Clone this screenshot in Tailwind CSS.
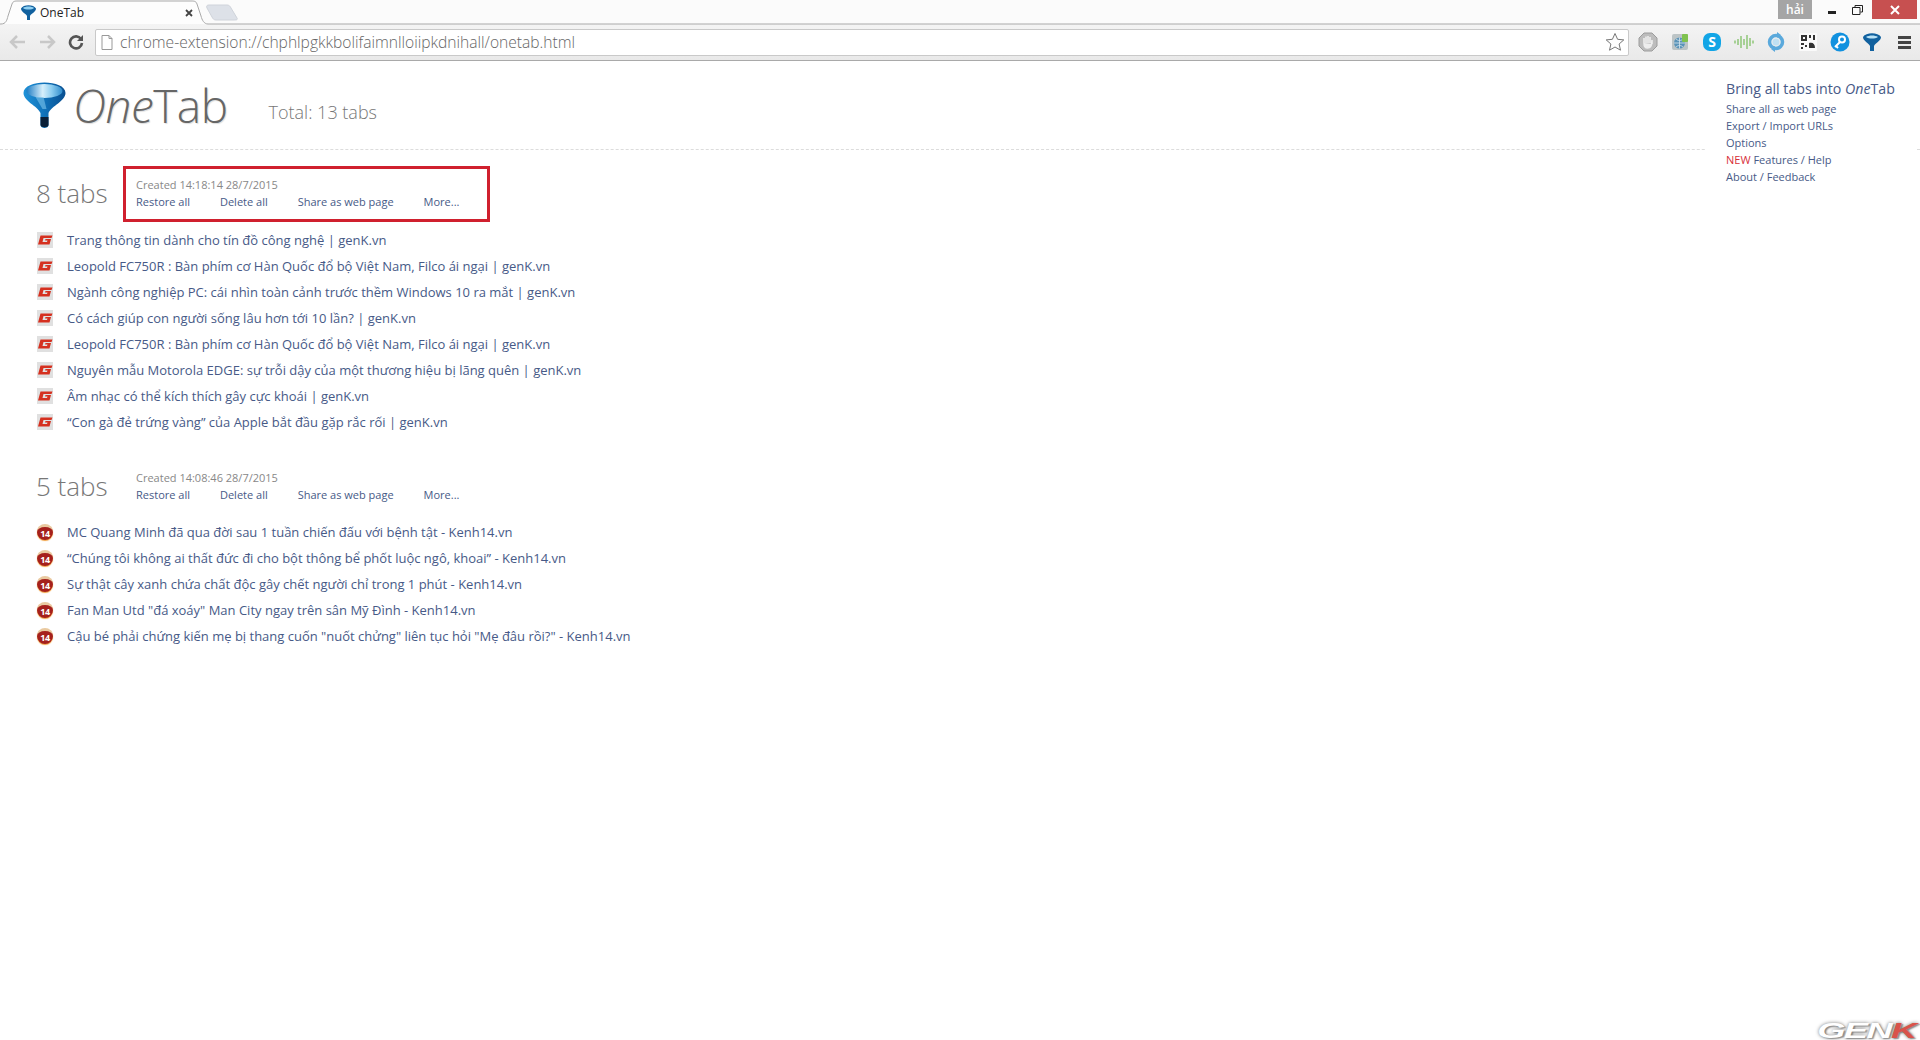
<!DOCTYPE html>
<html lang="vi">
<head>
<meta charset="utf-8">
<title>OneTab</title>
<script src="https://cdn.jsdelivr.net/npm/@tailwindcss/browser@4"></script>
</head>
<body class="relative h-[1040px] w-[1920px] overflow-hidden bg-white font-['Open_Sans',sans-serif]">

<!-- Browser chrome -->
<div class="relative h-[61px] border-b border-[#a9a9a9] bg-gradient-to-b from-[#fbfbfb] to-[#e9e9e9]">
  <!-- Tab strip -->
  <div class="relative flex h-6 items-start bg-[#fbfbfb]">
    <svg class="absolute left-0 top-0" width="1920" height="25" viewBox="0 0 1920 25">
      <path d="M208 24 H1920" stroke="#a9a9a9"/>
      <path d="M0 24 H1 C6 24 7 20 8 16 L12 4 C13 1 15 1 18 1 H191 C194 1 196 1 197 4 L201 16 C202 20 204 24 208 24" fill="#fdfdfd" stroke="#a9a9a9"/>
      <path d="M209 5 H227 C229 5 230 6 231 8 L237 18 C238 20 236 20 234 20 H216 C214 20 213 19 212 17 L207 8 C206 6 207 5 209 5 Z" fill="#dde1e8" stroke="#cfd3da"/>
    </svg>
    <svg class="absolute left-[21px] top-[5px]" width="15" height="16" viewBox="0 0 15 16"><path d="M0 3.500 C2 -1 13 -1 15 3.500 C15 7 10 8.500 9 11 V15 H6 V11 C5 8.500 0 7 0 3.500 Z" fill="#11619f"/><path d="M2 3 C4 1 11 1 13 3 C11 5 4 5 2 3 Z" fill="#8fd0f2"/></svg>
    <span class="absolute left-[40px] top-[4px] text-[12px] leading-[18px] text-[#222]">OneTab</span>
    <svg class="absolute left-[185px] top-[9px]" width="8" height="8" viewBox="0 0 8 8"><path d="M1 1 L7 7 M7 1 L1 7" stroke="#444" stroke-width="1.800"/></svg>
    <div class="ml-auto mr-[3px] flex h-[19px] items-stretch">
      <div class="flex w-[34px] items-center justify-center bg-[#a5a5a5] text-[12px] font-semibold text-white">hải</div>
      <div class="flex w-[30px] items-center justify-center pl-[9px]"><div class="mt-[5px] h-[3px] w-[8px] bg-[#222]"></div></div>
      <div class="flex w-[30px] items-center justify-center">
        <svg width="11" height="10" viewBox="0 0 11 10"><path d="M3 2 V0.500 H10.500 V7 H8.500 M0.500 2.500 H8 V9.500 H0.500 Z" fill="none" stroke="#222"/></svg>
      </div>
      <div class="flex w-[45px] items-center justify-center bg-[#c75050]">
        <svg width="10" height="10" viewBox="0 0 10 10"><path d="M1 1 L9 9 M9 1 L1 9" stroke="#fff" stroke-width="2"/></svg>
      </div>
    </div>
  </div>
  <!-- Toolbar -->
  <div class="flex h-9 items-center pl-[8px]">
    <svg width="20" height="16" viewBox="0 0 20 16" class="mr-[9px]"><path d="M9 2 L3 8 L9 14 M3 8 H17" fill="none" stroke="#c8c8c8" stroke-width="2.500"/></svg>
    <svg width="20" height="16" viewBox="0 0 20 16" class="mr-[11px]"><path d="M11 2 L17 8 L11 14 M17 8 H3" fill="none" stroke="#c8c8c8" stroke-width="2.500"/></svg>
    <svg width="16" height="16" viewBox="0 0 16 16" class="mr-[11px]"><path d="M13 5 A6 6 0 1 0 14 9" fill="none" stroke="#555" stroke-width="2.600"/><path d="M15 1 V7 H9 Z" fill="#555"/></svg>
    <div class="flex h-[27px] w-[1534px] items-center rounded-[2px] border border-[#c9c9c9] bg-white pl-[5px] pr-[3px]">
      <svg width="12" height="15" viewBox="0 0 12 15" class="mr-[7px] shrink-0"><path d="M1 .5 H8 L11 3.500 V14.500 H1 Z M8 .5 V3.500 H11" fill="#fff" stroke="#999"/></svg>
      <span class="pt-[1px] text-[15.6px] font-light text-[#666]">chrome-extension://chphlpgkkbolifaimnlloiipkdnihall/onetab.html</span>
      <svg width="20" height="20" viewBox="0 0 20 20" class="ml-auto"><path d="M10 1.500 L12.600 7.300 L18.800 7.900 L14.100 12 L15.500 18.200 L10 15 L4.500 18.200 L5.900 12 L1.200 7.900 L7.400 7.300 Z" fill="#fdfdfd" stroke="#777"/></svg>
    </div>
    <div class="ml-[3px] flex items-center">
      <div class="flex w-[32px] justify-center"><svg width="20" height="20" viewBox="0 0 20 20"><path d="M6 1 H14 L19 6 V14 L14 19 H6 L1 14 V6 Z" fill="#bdbdbd" stroke="#9c9c9c"/><path d="M6 11 V6 M8 11 V4.500 M10 11 V4 M12 11 V5 M14 12 V8 C14 14 12 16 9.500 16 C7 16 6 14 6 11" fill="#eee" stroke="#eee" stroke-width="1.600"/></svg></div>
      <div class="flex w-[32px] justify-center"><svg width="18" height="18" viewBox="0 0 18 18"><rect x="1" y="1" width="16" height="16" rx="2" fill="#bcc4c6"/><circle cx="8.500" cy="10" r="5.500" fill="#5a93b8"/><path d="M3 10 H14 M8.500 4.500 V15.500 M5 6 C7 8 10 8 12 6 M5 14 C7 12 10 12 12 14" fill="none" stroke="#d8e6ee" stroke-width=".8"/><rect x="11" y="1" width="6" height="8" rx="1" fill="#7fc24e"/></svg></div>
      <div class="flex w-[32px] justify-center"><div class="flex h-[18px] w-[18px] items-center justify-center rounded-[7px] bg-[#12a5e6] text-[14px] font-bold leading-none text-white">S</div></div>
      <div class="flex w-[32px] justify-center"><svg width="20" height="16" viewBox="0 0 20 16"><path d="M1 6.500 V9.500 M4 5 V11 M7 2 V14 M10 5 V11 M13 1 V15 M16 4 V12 M19 6.500 V9.500" stroke="#8fc678" stroke-width="1.500"/></svg></div>
      <div class="flex w-[32px] justify-center"><svg width="18" height="20" viewBox="0 0 18 20"><circle cx="9" cy="10" r="6.500" fill="none" stroke="#5aa9dc" stroke-width="3.500"/><circle cx="9" cy="10" r="3.500" fill="#bfe0f3"/><path d="M10 0 L14 3 L10 6 Z M8 14 L4 17 L8 20 Z" fill="#5aa9dc"/></svg></div>
      <div class="flex w-[32px] justify-center"><svg width="18" height="18" viewBox="0 0 18 18"><rect width="18" height="18" rx="1" fill="#fafafa"/><path d="M2 2 H8 V8 H2 Z M4 4 V6 H6 V4 Z M10 2 H12 V5 H10 Z M14 2 H16 V7 H14 Z M2 10 H5 V12 H2 Z M6 12 H8 V14 H6 Z M2 14 H4 V16 H2 Z M10 10 C14 9 16 11 16 15 H10 Z" fill="#333" fill-rule="evenodd"/></svg></div>
      <div class="flex w-[32px] justify-center"><svg width="20" height="20" viewBox="0 0 20 20"><circle cx="10" cy="10" r="9.500" fill="#1191df"/><circle cx="12" cy="7.500" r="3" fill="none" stroke="#fff" stroke-width="2"/><path d="M10 10 L5 15 M6 14 L8 16" stroke="#fff" stroke-width="2"/></svg></div>
      <div class="flex w-[32px] justify-center"><svg width="18" height="19" viewBox="0 0 18 19"><path d="M0 4 C3 -1 15 -1 18 4 C18 8 12 10 11 13 V18 H7 V13 C6 10 0 8 0 4 Z" fill="#11619f"/><path d="M3 4 C6 2 12 2 15 4 C12 6 6 6 3 4 Z" fill="#b9e3f7"/></svg></div>
      <div class="flex w-[32px] justify-center"><div class="flex w-[13px] flex-col gap-[2px]"><div class="h-[3px] bg-[#444]"></div><div class="h-[3px] bg-[#444]"></div><div class="h-[3px] bg-[#444]"></div></div></div>
    </div>
  </div>
</div>

<!-- Page header -->
<header class="flex h-[89px] items-start border-b border-dashed border-[#dcdcdc] pl-[23px]">
  <svg class="mt-[21px]" width="43" height="47" viewBox="0 0 42 47">
    <defs>
      <linearGradient id="fn" x1="0" y1="0" x2="1" y2="0"><stop offset="0" stop-color="#1f92d8"/><stop offset=".55" stop-color="#0f6fb6"/><stop offset="1" stop-color="#0a4f90"/></linearGradient>
      <linearGradient id="fm" x1="0" y1="0" x2="1" y2="0"><stop offset="0" stop-color="#1d7cc4"/><stop offset=".45" stop-color="#d6effb"/><stop offset=".7" stop-color="#8ccdf0"/><stop offset="1" stop-color="#2f8ccc"/></linearGradient>
    </defs>
    <path d="M0 11 C0 -3 42 -3 42 11 C42 19 28 24 25 31 V43 C25 47 17 47 17 43 V31 C14 24 0 19 0 11 Z" fill="url(#fn)"/>
    <path d="M17 35 V43 C17 46 25 46 25 43 V35 Z" fill="#0a2038"/>
    <ellipse cx="21" cy="9" rx="18" ry="7" fill="url(#fm)"/>
    <path d="M12 15 L19 27 L23 27 L20 15 Z" fill="#7cc5ec" opacity=".6"/>
  </svg>
  <div class="ml-[7px] mt-[14px] text-[46px] font-light leading-[60px] tracking-[-0.5px] text-[#666] [text-shadow:1px_1px_1px_#ddd]"><span class="italic">One</span>Tab</div>
  <div class="ml-[41px] mt-[38px] text-[18px] font-light leading-[26px] text-[#777]">Total: 13 tabs</div>
</header>

<!-- Group 1 -->
<section class="pt-[16px]">
  <div class="flex items-center pl-[36px]">
    <div class="w-[87px] pb-[2px] text-[26px] font-light leading-[36px] text-[#777]">8 tabs</div>
    <div class="h-[56px] w-[367px] border-[3px] border-[#d0202e] pl-[10px] pt-[7px]">
      <div class="text-[11px] leading-[17px] text-[#888]">Created 14:18:14 28/7/2015</div>
      <div class="flex gap-[30px] text-[11px] leading-[17px] text-[#475a87]"><span>Restore all</span><span>Delete all</span><span>Share as web page</span><span>More...</span></div>
    </div>
  </div>
  <ul class="mt-[5px] pl-[37px] text-[13px] text-[#475a87]">
    <li class="flex h-[26px] items-center gap-[14px]"><svg width="16" height="16" viewBox="0 0 16 16" class="shrink-0"><rect width="16" height="16" fill="#e0e0e0"/><path d="M3.500 3.500 H15.500 L14.500 6 H6.500 L5.500 10 H10 L10.500 8.500 H8 L8.500 7 H14 L12.500 12.500 H1 Z" fill="#d5301f"/></svg><span class="mt-[1px]">Trang thông tin dành cho tín đồ công nghệ | genK.vn</span></li>
    <li class="flex h-[26px] items-center gap-[14px]"><svg width="16" height="16" viewBox="0 0 16 16" class="shrink-0"><rect width="16" height="16" fill="#e0e0e0"/><path d="M3.500 3.500 H15.500 L14.500 6 H6.500 L5.500 10 H10 L10.500 8.500 H8 L8.500 7 H14 L12.500 12.500 H1 Z" fill="#d5301f"/></svg><span class="mt-[1px]">Leopold FC750R : Bàn phím cơ Hàn Quốc đổ bộ Việt Nam, Filco ái ngại | genK.vn</span></li>
    <li class="flex h-[26px] items-center gap-[14px]"><svg width="16" height="16" viewBox="0 0 16 16" class="shrink-0"><rect width="16" height="16" fill="#e0e0e0"/><path d="M3.500 3.500 H15.500 L14.500 6 H6.500 L5.500 10 H10 L10.500 8.500 H8 L8.500 7 H14 L12.500 12.500 H1 Z" fill="#d5301f"/></svg><span class="mt-[1px]">Ngành công nghiệp PC: cái nhìn toàn cảnh trước thềm Windows 10 ra mắt | genK.vn</span></li>
    <li class="flex h-[26px] items-center gap-[14px]"><svg width="16" height="16" viewBox="0 0 16 16" class="shrink-0"><rect width="16" height="16" fill="#e0e0e0"/><path d="M3.500 3.500 H15.500 L14.500 6 H6.500 L5.500 10 H10 L10.500 8.500 H8 L8.500 7 H14 L12.500 12.500 H1 Z" fill="#d5301f"/></svg><span class="mt-[1px]">Có cách giúp con người sống lâu hơn tới 10 lần? | genK.vn</span></li>
    <li class="flex h-[26px] items-center gap-[14px]"><svg width="16" height="16" viewBox="0 0 16 16" class="shrink-0"><rect width="16" height="16" fill="#e0e0e0"/><path d="M3.500 3.500 H15.500 L14.500 6 H6.500 L5.500 10 H10 L10.500 8.500 H8 L8.500 7 H14 L12.500 12.500 H1 Z" fill="#d5301f"/></svg><span class="mt-[1px]">Leopold FC750R : Bàn phím cơ Hàn Quốc đổ bộ Việt Nam, Filco ái ngại | genK.vn</span></li>
    <li class="flex h-[26px] items-center gap-[14px]"><svg width="16" height="16" viewBox="0 0 16 16" class="shrink-0"><rect width="16" height="16" fill="#e0e0e0"/><path d="M3.500 3.500 H15.500 L14.500 6 H6.500 L5.500 10 H10 L10.500 8.500 H8 L8.500 7 H14 L12.500 12.500 H1 Z" fill="#d5301f"/></svg><span class="mt-[1px]">Nguyên mẫu Motorola EDGE: sự trỗi dậy của một thương hiệu bị lãng quên | genK.vn</span></li>
    <li class="flex h-[26px] items-center gap-[14px]"><svg width="16" height="16" viewBox="0 0 16 16" class="shrink-0"><rect width="16" height="16" fill="#e0e0e0"/><path d="M3.500 3.500 H15.500 L14.500 6 H6.500 L5.500 10 H10 L10.500 8.500 H8 L8.500 7 H14 L12.500 12.500 H1 Z" fill="#d5301f"/></svg><span class="mt-[1px]">Âm nhạc có thể kích thích gây cực khoái | genK.vn</span></li>
    <li class="flex h-[26px] items-center gap-[14px]"><svg width="16" height="16" viewBox="0 0 16 16" class="shrink-0"><rect width="16" height="16" fill="#e0e0e0"/><path d="M3.500 3.500 H15.500 L14.500 6 H6.500 L5.500 10 H10 L10.500 8.500 H8 L8.500 7 H14 L12.500 12.500 H1 Z" fill="#d5301f"/></svg><span class="mt-[1px]">“Con gà đẻ trứng vàng” của Apple bắt đầu gặp rắc rối | genK.vn</span></li>
  </ul>
</section>

<!-- Group 2 -->
<section class="pt-[24px]">
  <div class="flex items-center pl-[36px]">
    <div class="w-[87px] pb-[2px] text-[26px] font-light leading-[36px] text-[#777]">5 tabs</div>
    <div class="h-[56px] w-[367px] border-[3px] border-transparent pl-[10px] pt-[7px]">
      <div class="text-[11px] leading-[17px] text-[#888]">Created 14:08:46 28/7/2015</div>
      <div class="flex gap-[30px] text-[11px] leading-[17px] text-[#475a87]"><span>Restore all</span><span>Delete all</span><span>Share as web page</span><span>More...</span></div>
    </div>
  </div>
  <ul class="mt-[4px] pl-[37px] text-[13px] text-[#475a87]">
    <li class="flex h-[26px] items-center gap-[14px]"><div class="flex h-[16px] w-[16px] shrink-0 items-center justify-center rounded-full border-t-[3px] border-t-[#e9c9a0] bg-[#a5201c] text-[9px] font-bold leading-[12px] tracking-[-0.5px] text-white shadow-[0_1px_1px_#f0a040]">14</div><span class="mt-[1px]">MC Quang Minh đã qua đời sau 1 tuần chiến đấu với bệnh tật - Kenh14.vn</span></li>
    <li class="flex h-[26px] items-center gap-[14px]"><div class="flex h-[16px] w-[16px] shrink-0 items-center justify-center rounded-full border-t-[3px] border-t-[#e9c9a0] bg-[#a5201c] text-[9px] font-bold leading-[12px] tracking-[-0.5px] text-white shadow-[0_1px_1px_#f0a040]">14</div><span class="mt-[1px]">“Chúng tôi không ai thất đức đi cho bột thông bể phốt luộc ngô, khoai” - Kenh14.vn</span></li>
    <li class="flex h-[26px] items-center gap-[14px]"><div class="flex h-[16px] w-[16px] shrink-0 items-center justify-center rounded-full border-t-[3px] border-t-[#e9c9a0] bg-[#a5201c] text-[9px] font-bold leading-[12px] tracking-[-0.5px] text-white shadow-[0_1px_1px_#f0a040]">14</div><span class="mt-[1px]">Sự thật cây xanh chứa chất độc gây chết người chỉ trong 1 phút - Kenh14.vn</span></li>
    <li class="flex h-[26px] items-center gap-[14px]"><div class="flex h-[16px] w-[16px] shrink-0 items-center justify-center rounded-full border-t-[3px] border-t-[#e9c9a0] bg-[#a5201c] text-[9px] font-bold leading-[12px] tracking-[-0.5px] text-white shadow-[0_1px_1px_#f0a040]">14</div><span class="mt-[1px]">Fan Man Utd "đá xoáy" Man City ngay trên sân Mỹ Đình - Kenh14.vn</span></li>
    <li class="flex h-[26px] items-center gap-[14px]"><div class="flex h-[16px] w-[16px] shrink-0 items-center justify-center rounded-full border-t-[3px] border-t-[#e9c9a0] bg-[#a5201c] text-[9px] font-bold leading-[12px] tracking-[-0.5px] text-white shadow-[0_1px_1px_#f0a040]">14</div><span class="mt-[1px]">Cậu bé phải chứng kiến mẹ bị thang cuốn "nuốt chửng" liên tục hỏi "Mẹ đâu rồi?" - Kenh14.vn</span></li>
  </ul>
</section>

<!-- Side menu, lies over the dashed line -->
<aside class="absolute left-[1705px] top-[78px] w-[212px] bg-white pb-[8px] pl-[21px] text-[11px] leading-[17px] text-[#475a87]">
  <div class="text-[14.2px] leading-[22px]">Bring all tabs into <span class="italic">One</span>Tab</div>
  <div>Share all as web page</div>
  <div>Export / Import URLs</div>
  <div>Options</div>
  <div><span class="text-[#d8303a]">NEW</span> Features / Help</div>
  <div>About / Feedback</div>
</aside>

<!-- Watermark -->
<div class="absolute bottom-[-3px] right-[4px] origin-right scale-x-[1.65] font-['Liberation_Sans',sans-serif] text-[22px] font-bold italic leading-[24px] tracking-[-1px] text-white [text-shadow:0_0_3px_#777,1px_1px_1px_#999]">GEN<span class="text-[#d9534a]">K</span></div>

</body>
</html>
